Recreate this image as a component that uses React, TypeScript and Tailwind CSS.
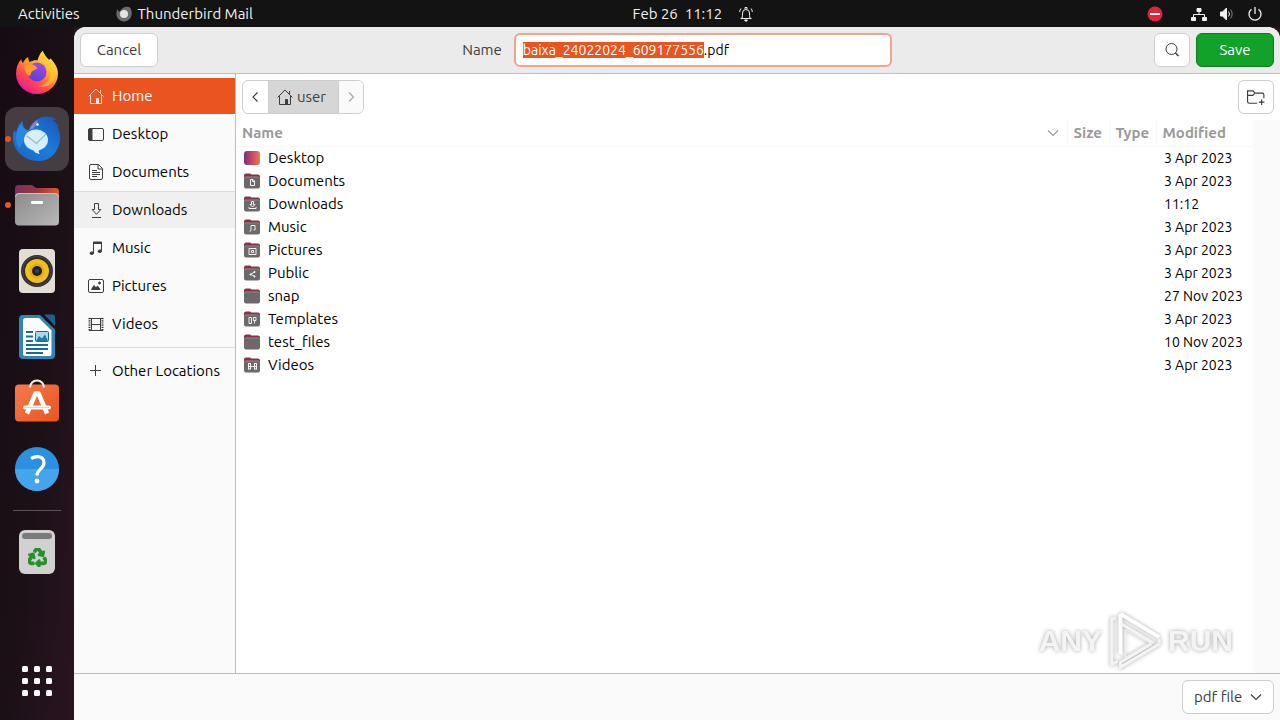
import { useEffect, useRef, type ReactNode } from "react";
import { FaRecycle } from "react-icons/fa";

/* ---------- Symbolic icons ---------- */

function Glyph({ children, className = "size-4" }: { children: ReactNode; className?: string }) {
  return (
    <svg viewBox="0 0 16 16" fill="none" stroke="currentColor" strokeWidth="1" className={`shrink-0 ${className}`} aria-hidden="true">
      {children}
    </svg>
  );
}

const HomeGlyph = () => (
  <Glyph>
    <path d="M.6 8.4 8 1l7.4 7.4M2.5 6.8v8.7h11V6.800M12.5 5.300V2" />
    <path d="M8.500 15.500v-5h2v5z" fill="currentColor" />
  </Glyph>
);
const DesktopGlyph = () => (
  <Glyph>
    <rect x=".5" y="2.500" width="15" height="12" rx="1.500" />
    <path d="M1 3h3v11H1z" fill="currentColor" />
  </Glyph>
);
const DocumentGlyph = () => (
  <Glyph>
    <path d="M3 .5h7.500l4 4V14a1.500 1.500 0 0 1-1.500 1.500H3A1.500 1.500 0 0 1 1.500 14V2A1.500 1.500 0 0 1 3 .5z" />
    <path d="M10 .5V5h4.500M4 6.500h5M4 8.500h8M4 10.500h8M4 12.500h5" />
  </Glyph>
);
const DownloadGlyph = () => (
  <Glyph>
    <path d="M6.500 1.500h4v6h2.300l-4.300 4.800-4.300-4.800h2.300zM4 15.500h9" />
  </Glyph>
);
const MusicGlyph = () => (
  <Glyph>
    <path d="M5.500 13V2.500h8V11" />
    <path d="M5.500 2h8v1.500h-8z" fill="currentColor" />
    <ellipse cx="3.800" cy="13.200" rx="1.700" ry="1.300" fill="currentColor" />
    <ellipse cx="11.800" cy="11.200" rx="1.700" ry="1.300" fill="currentColor" />
  </Glyph>
);
const PictureGlyph = () => (
  <Glyph>
    <rect x=".5" y="1.500" width="15" height="13" rx="1.500" />
    <path d="m3.500 11.500 2.500-4 2 2.500 1.500-2 2.500 3.500z" fill="currentColor" />
    <circle cx="11.500" cy="5" r="1" fill="currentColor" />
  </Glyph>
);
const VideoGlyph = () => (
  <Glyph>
    <path d="M1.500 2v12.500M14.500 2v12.500" strokeWidth="2" strokeDasharray="1.200 1" />
    <path d="M3.500 2.500h9v12h-9zM3.500 8.500h9M1 2.500h14M1 14.500h14" />
  </Glyph>
);
const PlusGlyph = () => (
  <Glyph>
    <path d="M7.500 2v11M2 7.500h11" />
  </Glyph>
);
const LeftGlyph = () => (
  <Glyph>
    <path d="M9.500 3.500 5 8l4.500 4.500" strokeWidth="1.200" />
  </Glyph>
);
const RightGlyph = () => (
  <Glyph>
    <path d="M6 3.500 10.500 8 6 12.500" strokeWidth="1.200" />
  </Glyph>
);
const DownGlyph = ({ className }: { className?: string }) => (
  <Glyph className={className}>
    <path d="M3 5.500 8 10.500l5-5" strokeWidth="1.200" />
  </Glyph>
);

/* ---------- Dock icons ---------- */

const FirefoxIcon = () => (
  <svg viewBox="0 0 48 48" className="size-12" aria-hidden="true">
    <defs>
      <linearGradient id="ff-body" x1=".85" y1=".1" x2=".25" y2=".95">
        <stop offset="0" stopColor="#fff04a" />
        <stop offset=".4" stopColor="#ffa42b" />
        <stop offset=".7" stopColor="#ff4a4a" />
        <stop offset="1" stopColor="#e8199b" />
      </linearGradient>
      <linearGradient id="ff-globe" x1=".7" y1="0" x2=".3" y2="1">
        <stop offset="0" stopColor="#a14bf0" />
        <stop offset="1" stopColor="#5a3fd0" />
      </linearGradient>
    </defs>
    <path d="M29.800 1.800c.7 3 3.600 6.300 6.200 9 .9-.1 1.300-.8 1.400-1.500 3.600 4.200 7.600 8.700 7.600 15.500A21 20.500 0 0 1 24 45 21 20.500 0 0 1 3 25c0-6 1.700-10.800 5.300-14.700.4 1.700.8 2.700 1.700 3.600 1.300-2.800 3-4.700 5.200-6 0 2.300.5 3.900 1.700 5.200 2.600-1.800 5.200-2 7.500-1.600 1.300-4.100 2.800-7.500 5.400-9.700z" fill="url(#ff-body)" />
    <circle cx="24" cy="23" r="9.500" fill="url(#ff-globe)" />
    <path d="M11 18c4-4.500 9-3.500 12-.5l1.500 1.700c-2 1.800-5 2.200-6 3.500-1 1.800-.5 4-2.500 4.300-2-2-5-5.500-5-9z" fill="#ff9a2f" />
    <path d="M27 11.500c5 1.500 8.500 6 7.500 12 2-1 3-2.500 3-2.500 2 9-5 16-13 16 11 3 20-5 18.500-15C42 17 36 12 30 5c-1.500 2-2.500 4-3 6.500z" fill="#ffca35" opacity=".6" />
  </svg>
);

const ThunderbirdIcon = () => (
  <svg viewBox="0 0 52 48" className="h-12 w-[52px]" aria-hidden="true">
    <defs>
      <linearGradient id="tb-body" x1="1" y1="0" x2="0" y2="1">
        <stop offset="0" stopColor="#1b53b5" />
        <stop offset=".5" stopColor="#1a7de0" />
        <stop offset="1" stopColor="#1565c0" />
      </linearGradient>
    </defs>
    <path d="M18.500 15C20 7 28 1.500 36 1.500c3.500 0 7 1 10 3l-5 .5c3 1.500 5 3.500 7 6.500l-2-.5c3 5 4 11 2.500 17-2.500 11-11 18.500-22 18-13-.5-23-9-24.500-21-.5-4 0-7 1.500-10l1.500 3c1-5 3-9 6.500-12 .5 5 1 9 7 9z" fill="url(#tb-body)" />
    <path d="M10.500 8c-6 9-7.500 18-2 26 2-5 4-8 6-10 0-3 1-6 3-8-4-1-7-3-7-8z" fill="#3b94ee" opacity=".5" />
    <ellipse cx="25" cy="25" rx="12" ry="10.500" fill="#d5f0fc" />
    <path d="M22 34c1 3.500 3.500 4.500 7 5-2-2-1.500-4 .5-5z" fill="#d5f0fc" />
    <path d="m16 21 9.500 7.500L35 19" fill="none" stroke="#9fb6c4" strokeWidth="1.300" />
    <path d="M18 15c1.500-4 4.500-8 8.500-10 .5 3-2 7-5.500 9z" fill="#a78bd8" opacity=".7" />
    <circle cx="26.500" cy="9.500" r="1.200" fill="#fff" />
  </svg>
);

const FilesIcon = () => (
  <svg viewBox="0 0 48 48" className="size-12" aria-hidden="true">
    <defs>
      <linearGradient id="files-back" x1="0" y1="0" x2="1" y2="0">
        <stop offset="0" stopColor="#77305f" />
        <stop offset=".5" stopColor="#9c3443" />
        <stop offset="1" stopColor="#e4572c" />
      </linearGradient>
      <linearGradient id="files-front" x1="0" y1="0" x2="1" y2="1">
        <stop offset="0" stopColor="#8b8b8b" />
        <stop offset="1" stopColor="#b8b8b8" />
      </linearGradient>
    </defs>
    <path d="M2 7.500A3.500 3.500 0 0 1 5.500 4H18c3 0 3 3 6 3h18.500a3.500 3.500 0 0 1 3.500 3.500V24H2z" fill="url(#files-back)" />
    <rect x="2" y="12" width="44" height="32.500" rx="4" fill="url(#files-front)" />
    <path d="M2.500 16a3.500 3.500 0 0 1 3.500-3.500h36a3.500 3.500 0 0 1 3.500 3.500" fill="none" stroke="#c4c4c4" />
    <rect x="18" y="20" width="12" height="3" rx="1" fill="#fff" />
  </svg>
);

const RhythmboxIcon = () => (
  <svg viewBox="0 0 48 48" className="size-12" aria-hidden="true">
    <rect x="6" y="2" width="36" height="44" rx="4" fill="#e2ddd5" />
    <circle cx="24" cy="24" r="16" fill="#2b2d30" />
    <circle cx="24" cy="24" r="14.500" fill="none" stroke="#46484b" />
    <circle cx="24" cy="24" r="12" fill="#f2bf1d" />
    <circle cx="24" cy="24" r="7.500" fill="#e3ae14" />
    <circle cx="24" cy="24" r="5" fill="#1e2022" />
    <circle cx="24" cy="24" r="2" fill="#3c4148" />
  </svg>
);

const WriterIcon = () => (
  <svg viewBox="0 0 48 48" className="size-12" aria-hidden="true">
    <path d="M10 2h17l15 14.500V42a4 4 0 0 1-4 4H10a4 4 0 0 1-4-4V6a4 4 0 0 1 4-4z" fill="#2f86b3" />
    <path d="M12.500 5H26l12.500 12.500V41a2 2 0 0 1-2 2h-24a2.500 2.500 0 0 1-2.500-2.500v-33A2.500 2.500 0 0 1 12.500 5z" fill="#fff" />
    <path d="M31 1.500h9a2 2 0 0 1 2 2v9.500z" fill="#1c6187" />
    <path d="M13 19h7M13 23.500h7M13 28h7M13 32h22M13 36h22M13 40h17" stroke="#176a96" strokeWidth="2" />
    <rect x="22.500" y="18.500" width="13" height="10" rx="1" fill="#a9d7ee" stroke="#176a96" />
    <path d="m23 28 3-5 3 2.500 3-4 3 6.500z" fill="#2379a4" />
  </svg>
);

const SoftwareIcon = () => (
  <svg viewBox="0 0 48 48" className="size-12" aria-hidden="true">
    <defs>
      <linearGradient id="store" x1="0" y1="0" x2="1" y2="1">
        <stop offset="0" stopColor="#f67a4c" />
        <stop offset="1" stopColor="#e95420" />
      </linearGradient>
    </defs>
    <rect x="2" y="5.500" width="44" height="37" rx="4" fill="url(#store)" />
    <path d="M17 8.500a7 7 0 0 1 14 0" fill="none" stroke="#f7eee9" strokeWidth="2" />
    <path d="m14 34.500 8.500-20h3l8.500 20" fill="none" stroke="#fff" strokeWidth="4.500" strokeLinejoin="round" />
    <rect x="10" y="26.500" width="28" height="4" rx="2" fill="#fff" />
    <path d="M12 28.500h24" stroke="#f4b79f" strokeWidth=".7" />
  </svg>
);

const HelpIcon = () => (
  <svg viewBox="0 0 48 48" className="size-12" aria-hidden="true">
    <circle cx="24" cy="24" r="22" fill="#2a90df" />
    <path d="M2 24a22 22 0 0 0 44 0z" fill="#45a5ea" />
    <path d="M18 13.500c6.500-3.800 13-1.500 13 4.300 0 6-7 6.200-7 12.700" fill="none" stroke="#fff" strokeWidth="3.200" />
    <circle cx="24" cy="36" r="2.400" fill="#fff" />
  </svg>
);

const TrashIcon = () => (
  <span className="flex h-11 w-9 flex-col items-center rounded-md bg-[#d2d0d0] pt-[3px]">
    <span className="h-[6px] w-[30px] rounded-sm bg-[#7a7a7a]" />
    <FaRecycle className="mt-[9px] size-[19px] stroke-current stroke-[36px] text-[#26912a]" />
  </span>
);

const GridIcon = () => (
  <svg viewBox="0 0 30 30" className="size-[30px] fill-white" aria-hidden="true">
    {[0, 12, 24].map((y) => [0, 12, 24].map((x) => <rect key={`${x}-${y}`} x={x} y={y} width="6" height="6" rx="1.500" />))}
  </svg>
);

/* ---------- Folder icons ---------- */

const emblems: Record<string, ReactNode> = {
  Documents: <path d="M6.500 6.500h2.500l1.500 1.500v4.500h-4zM8.500 6.500v2h2" />,
  Downloads: <path d="M7.500 5.500h2v3H11l-2.500 2.500L6 8.500h1.500zM5 11v1.500h7V11" />,
  Music: <path d="M7 11.500v-5h4V11M5.500 12H7M9.500 11H11" />,
  Pictures: <path d="M5 6.500h7v6H5zM7.500 8.500h2v2h-2z" />,
  Public: <path d="M10.500 7 6.500 9.300l4 2M10 6.500h1v1h-1zM6 9h1v1H6zM10 11h1v1h-1z" />,
  Templates: <path d="M5 6.500h2.500v6H5zM9.500 6.500H12v3H9.500zM10.500 9.500v3" />,
  Videos: <path d="M4.500 6v6.500M12.500 6v6.500M6.500 6v6.500M10.500 6v6.500M6.500 9.500h4M4.500 6.500h2M10.500 6.500h2M4.500 9.500h2M10.500 9.500h2M4.500 12h2M10.500 12h2" />,
};

function FolderIcon({ name }: { name: string }) {
  if (name === "Desktop")
    return <span className="block h-[14px] w-4 rounded-[3px] bg-linear-to-r from-[#75316f] via-[#c8486a] to-[#ef7648]" />;
  return (
    <svg viewBox="0 0 16 16" className="block size-4" fill="none" aria-hidden="true">
      <path d="M0 2.500A2 2 0 0 1 2 .500h4l1.500 1H14a2 2 0 0 1 2 2V8H0z" fill="#8c3147" />
      <rect y="3.500" width="16" height="12" rx="2" fill="#6b6969" />
      <path d="M.5 5.500A1.500 1.500 0 0 1 2 4h12a1.500 1.500 0 0 1 1.500 1.500" stroke="#8a8787" />
      <g stroke="#f4f2f2">{emblems[name]}</g>
    </svg>
  );
}

/* ---------- Data ---------- */

const dockApps = [
  { label: "Firefox", icon: <FirefoxIcon /> },
  { label: "Thunderbird Mail", icon: <ThunderbirdIcon />, running: true, active: true },
  { label: "Files", icon: <FilesIcon />, running: true },
  { label: "Rhythmbox", icon: <RhythmboxIcon /> },
  { label: "LibreOffice Writer", icon: <WriterIcon /> },
  { label: "Ubuntu Software", icon: <SoftwareIcon /> },
  { label: "Help", icon: <HelpIcon /> },
];

const places = [
  { label: "Home", icon: <HomeGlyph />, look: "bg-[#e95420] text-white" },
  { label: "Desktop", icon: <DesktopGlyph />, look: "" },
  { label: "Documents", icon: <DocumentGlyph />, look: "" },
  { label: "Downloads", icon: <DownloadGlyph />, look: "bg-[#f0f0f0] shadow-[0_-1px_0_#dcdcdc]" },
  { label: "Music", icon: <MusicGlyph />, look: "" },
  { label: "Pictures", icon: <PictureGlyph />, look: "" },
  { label: "Videos", icon: <VideoGlyph />, look: "" },
];

const files = [
  ["Desktop", "3 Apr 2023"],
  ["Documents", "3 Apr 2023"],
  ["Downloads", "11:12"],
  ["Music", "3 Apr 2023"],
  ["Pictures", "3 Apr 2023"],
  ["Public", "3 Apr 2023"],
  ["snap", "27 Nov 2023"],
  ["Templates", "3 Apr 2023"],
  ["test_files", "10 Nov 2023"],
  ["Videos", "3 Apr 2023"],
];

/* ---------- Sections ---------- */

function TopBar() {
  return (
    <header className="grid h-[27px] grid-cols-[634fr_auto_527fr] items-center bg-[#131313] text-[#f2f2f2]">
      <div className="flex items-center gap-9 pl-[18px]">
        <button>Activities</button>
        <button className="flex items-center gap-[6px]">
          <svg viewBox="0 0 16 16" className="size-4" aria-hidden="true">
            <path d="M5 4C7 1 11 0 14 1.500c2 3 2.500 8 0 11-3 4-9 4-12 0C0 10 0 6 1.500 3L3 6z" fill="#6d6d6d" />
            <circle cx="8" cy="8" r="4" fill="#e4e4e4" />
          </svg>
          Thunderbird Mail
        </button>
      </div>
      <button className="flex items-center gap-4">
        <time className="whitespace-pre">Feb 26  11:12</time>
        <Glyph>
          <path d="M2.500 12.500h11M4 12c.6-1.500.5-3 .5-5a3.500 3.500 0 0 1 7 0c0 2-.1 3.500.5 5M3 2.500A5 5 0 0 0 1.700 6M13 2.500A5 5 0 0 1 14.300 6M7 3V1.500h2V3" />
          <path d="M6.500 14h3L8 15.500z" fill="currentColor" />
        </Glyph>
      </button>
      <div className="flex items-center justify-end gap-3 pr-[17px]">
        <svg viewBox="0 0 16 16" className="mr-4 size-4" aria-hidden="true">
          <circle cx="8" cy="8" r="7.500" fill="#e22440" />
          <path d="M3 8h10" stroke="#fff" strokeWidth="2" />
        </svg>
        <Glyph>
          <path d="M8 5v4M2.500 12V8.500h11V12" />
          <path d="M6 2.500h4v3H6zM.5 11.500h4v3h-4zM11.500 11.500h4v3h-4z" fill="currentColor" />
        </Glyph>
        <Glyph>
          <path d="M1.500 6h2L7.500 2v12l-4-4h-2z" fill="currentColor" />
          <path d="M9.500 5.500a4 4 0 0 1 0 5" />
          <path d="M11.500 3.500a7 7 0 0 1 0 9" opacity=".5" />
        </Glyph>
        <Glyph>
          <path d="M8 1v7M4.500 3.200a6 6 0 1 0 7 0" strokeWidth="1.300" />
        </Glyph>
      </div>
    </header>
  );
}

function Dock() {
  return (
    <nav aria-label="Dock" className="flex w-[74px] shrink-0 flex-col items-center gap-[2px] bg-linear-to-br from-[#170b13] via-[#1a1016] to-[#2a1420] pt-[14px] pb-[7px]">
      {dockApps.map((app) => (
        <button
          key={app.label}
          aria-label={app.label}
          className={`relative flex size-16 shrink-0 items-center justify-center rounded-xl ${app.active ? "bg-[#453d42]" : ""}`}
        >
          {app.icon}
          {app.running && <span className="absolute left-0 size-[6px] rounded-full bg-[#e95420]" />}
        </button>
      ))}
      <hr className="my-[7px] w-12 border-[#5c5359]" />
      <button aria-label="Trash" className="flex size-16 shrink-0 items-center justify-center">
        <TrashIcon />
      </button>
      <button aria-label="Show Applications" className="mt-auto flex size-16 shrink-0 items-center justify-center">
        <GridIcon />
      </button>
    </nav>
  );
}

function DialogHeader() {
  const nameRef = useRef<HTMLInputElement>(null);
  useEffect(() => {
    const input = nameRef.current;
    input?.focus();
    input?.setSelectionRange(0, input.value.lastIndexOf("."));
  }, []);
  return (
    <div className="grid grid-cols-[1fr_auto_1fr] items-center border-b border-[#bdbdbd] bg-[#ebebeb] px-[6px] py-[6px]">
      <button className="h-[34px] w-[78px] rounded-md border border-[#cdcdcd] bg-white">Cancel</button>
      <div className="flex items-center gap-3">
        <label htmlFor="filename">Name</label>
        <input
          id="filename"
          ref={nameRef}
          defaultValue="baixa_24022024_609177556.pdf"
          spellCheck={false}
          className="h-[34px] w-[378px] rounded-md border-2 border-[#f0a58c] bg-white px-[7px] text-sm text-black outline-none selection:bg-[#e95420] selection:text-white"
        />
      </div>
      <div className="flex justify-end gap-[6px]">
        <button aria-label="Search" className="flex h-[34px] w-9 items-center justify-center rounded-md border border-[#cdcdcd] bg-white">
          <Glyph>
            <circle cx="7.500" cy="7" r="5.500" />
            <path d="m11.500 11 3 3" strokeWidth="1.500" />
          </Glyph>
        </button>
        <button className="h-[34px] w-[78px] rounded-md border border-[#0d7a1e] bg-[#12a129] text-white">Save</button>
      </div>
    </div>
  );
}

function Sidebar() {
  return (
    <nav aria-label="Places" className="flex w-[162px] shrink-0 flex-col gap-[2px] border-r border-[#bdbdbd] bg-[#fafafa] pt-1 text-black">
      {places.map((place) => (
        <button key={place.label} className={`flex h-9 items-center gap-2 pl-[14px] ${place.look}`}>
          <span className={place.label === "Home" ? "text-white/80" : "text-[#3d3d3d]"}>{place.icon}</span>
          {place.label}
        </button>
      ))}
      <hr className="my-[3px] border-[#dadada]" />
      <button className="flex h-9 items-center gap-2 pl-[14px] whitespace-nowrap">
        <span className="text-[#3d3d3d]">
          <PlusGlyph />
        </span>
        Other Locations
      </button>
    </nav>
  );
}

function Browser() {
  return (
    <main className="flex min-w-0 flex-1 flex-col bg-white">
      <div className="flex items-center justify-between px-[6px] py-[6px]">
        <div className="flex h-[34px] overflow-hidden rounded-md border border-[#cdcdcd]">
          <button aria-label="Back" className="flex w-[25px] items-center justify-center">
            <LeftGlyph />
          </button>
          <button className="flex items-center gap-1 border-x border-[#cdcdcd] bg-[#d6d6d6] pr-3 pl-2">
            <HomeGlyph />
            user
          </button>
          <button aria-label="Forward" disabled className="flex w-6 items-center justify-center bg-[#fafafa] text-[#a8a8a8]">
            <RightGlyph />
          </button>
        </div>
        <button aria-label="Create Folder" className="flex h-[34px] w-9 items-center justify-center rounded-md border border-[#cdcdcd]">
          <Glyph className="size-[18px]">
            <path d="M9 13.500H2A1.500 1.500 0 0 1 .500 12V2.500h5l1.500 2h6.500A1.500 1.500 0 0 1 15 6v3M.5 6.500h4.500l2-2M13 10v5M10.500 12.500h5" />
          </Glyph>
        </button>
      </div>
      <div className="relative flex-1 bg-[#fafafa] pr-[27px]">
        <div className="h-full bg-white">
          <table className="w-full table-fixed border-collapse text-left text-black">
            <colgroup>
              <col />
              <col className="w-[42px]" />
              <col className="w-[47px]" />
              <col className="w-[97px]" />
            </colgroup>
            <thead className="text-[#9a9a9a]">
              <tr className="h-[26px] border-b border-[#f8f8f8]">
                <th className="border-r border-[#f8f8f8] p-0 pr-[6px] pl-[6px]">
                  <span className="flex items-center justify-between">
                    Name
                    <DownGlyph />
                  </span>
                </th>
                <th className="border-r border-[#f8f8f8] p-0 pl-[6px]">Size</th>
                <th className="border-r border-[#f8f8f8] p-0 pl-[6px]">Type</th>
                <th className="p-0 pl-[6px]">Modified</th>
              </tr>
            </thead>
            <tbody>
              {files.map(([name, modified]) => (
                <tr key={name} className="h-[23px]">
                  <td className="p-0 pl-2">
                    <span className="flex items-center gap-2">
                      <span className="w-4">
                        <FolderIcon name={name} />
                      </span>
                      {name}
                    </span>
                  </td>
                  <td />
                  <td />
                  <td className="p-0 pl-2 text-sm whitespace-nowrap">{modified}</td>
                </tr>
              ))}
            </tbody>
          </table>
        </div>
        <Watermark />
      </div>
    </main>
  );
}

function Watermark() {
  return (
    <div className="pointer-events-none absolute right-[47px] bottom-0 flex items-center gap-1 font-['Liberation_Sans',sans-serif] text-[30px] leading-none font-bold text-[#f4f4f4] drop-shadow-[0_0_2px_rgba(0,0,0,0.35)]">
      <span>ANY</span>
      <svg viewBox="0 0 60 64" className="h-16 w-[58px]" fill="none" stroke="currentColor" strokeWidth="4" aria-hidden="true">
        <path d="M15 4v42M15 4l40 24" stroke="#fff" />
        <path d="M10 9H6v47l6-3M15 14l34 20M55 30v5L15 59v-5l32-19" strokeWidth="3" />
        <path d="M20 20v29l26-15z" strokeWidth="1" />
      </svg>
      <span>RUN</span>
    </div>
  );
}

function DialogFooter() {
  return (
    <footer className="flex justify-end border-t border-[#bdbdbd] bg-[#fafafa] p-[6px]">
      <div className="relative flex items-center">
        <select aria-label="File type" className="h-[34px] w-[92px] appearance-none rounded-md border border-[#cdcdcd] bg-white pl-[11px]">
          <option>pdf file</option>
        </select>
        <DownGlyph className="pointer-events-none absolute right-[10px] size-4" />
      </div>
    </footer>
  );
}

export default function App() {
  return (
    <div className="flex min-h-screen flex-col bg-[#131313] font-['Ubuntu','Noto_Sans',sans-serif] text-[15px] leading-5 text-[#3d3d3d]">
      <TopBar />
      <div className="flex flex-1 bg-[#2a1420]">
        <Dock />
        <section aria-label="Save file" className="flex min-w-0 flex-1 flex-col overflow-hidden rounded-t-xl bg-white">
          <DialogHeader />
          <div className="flex flex-1">
            <Sidebar />
            <Browser />
          </div>
          <DialogFooter />
        </section>
      </div>
    </div>
  );
}
